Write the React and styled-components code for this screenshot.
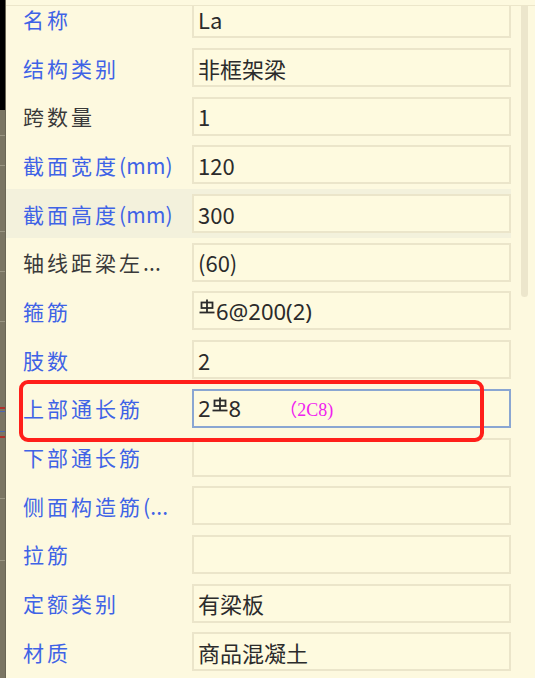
import React from 'react';
import styled, { createGlobalStyle } from 'styled-components';

const Global = createGlobalStyle`
  html, body { margin: 0; padding: 0; background: #fdf9df; }
  body { font-family: "Noto Sans CJK SC", "Noto Sans", sans-serif; }
`;

const Screen = styled.div`
  position: relative;
  width: 535px;
  height: 678px;
  display: flex;
  overflow: hidden;
  background: #fdf9df;
`;

const SideStrip = styled.div`
  width: 6px;
  flex: none;
  border-right: 1px solid #6a6655;
  box-sizing: border-box;
  background:
    linear-gradient(#000 0 110px, transparent 110px),
    linear-gradient(transparent 135px, #9a9683 135px 136px, transparent 136px 165px, #9a9683 165px 166px, transparent 166px 231px, #9a9683 231px 232px, transparent 232px 271px, #9a9683 271px 272px, transparent 272px 321px, #9a9683 321px 322px, transparent 322px 407px, #b0302a 407px 409px, transparent 409px 411px, #4a66b0 411px 412px, transparent 412px 431px, #4a66b0 431px 432px, transparent 432px 436px, #b0302a 436px 438px, transparent 438px 498px, #9a9683 498px 499px, transparent 499px 560px, #9a9683 560px 561px, transparent 561px),
    #7a7563;
`;

const Panel = styled.div`
  flex: 1;
  min-width: 0;
  display: flex;
  flex-direction: column;
`;

const TopRule = styled.div`
  flex: none;
  height: 5px;
  border-bottom: 1px solid #ece6ca;
`;

const Body = styled.div`
  flex: 1;
  min-height: 0;
  display: flex;
  overflow: hidden;
`;

const List = styled.div`
  flex: none;
  width: 505px;
  margin-top: -11.5px;
  display: flex;
  flex-direction: column;
`;

const Row = styled.div`
  flex: none;
  height: 48.7px;
  display: flex;
  align-items: center;
  background: ${p => (p.$hl ? '#f3f1dc' : 'transparent')};
`;

const Label = styled.div`
  width: 186px;
  box-sizing: border-box;
  padding-left: 17px;
  font-size: 21px;
  letter-spacing: 3px;
  white-space: nowrap;
  color: ${p => (p.$dark ? '#3a3a3a' : '#3f63e6')};
`;

const Latin = styled.span`
  letter-spacing: 0.2px;
  font-size: 21px;
`;

const ValueBox = styled.div`
  width: 319px;
  height: 39px;
  box-sizing: border-box;
  border: 2px solid ${p => (p.$active ? '#8aa6d2' : '#ebe5ca')};
  background: #fefadf;
  display: flex;
  align-items: center;
  padding-left: 4px;
  font-size: 22px;
  color: #2b2b2b;
  white-space: nowrap;
`;

const Num = styled.span`
  font-family: "Noto Sans", "Noto Sans CJK SC", sans-serif;
  font-size: 22px;
`;

const Hint = styled.span`
  margin-left: 38px;
  font-family: "Liberation Serif", "Noto Sans CJK SC", serif;
  font-size: 18px;
  color: #f020f0;
`;

const ScrollTrack = styled.div`
  flex: none;
  width: 24px;
  padding-left: 10px;
  box-sizing: border-box;
`;

const Thumb = styled.div`
  width: 7px;
  height: 291px;
  border-radius: 0 0 4px 4px;
  background: #ece6cc;
`;

const Callout = styled.div`
  position: absolute;
  left: 19px;
  top: 380px;
  width: 465px;
  height: 62px;
  box-sizing: border-box;
  border: 4px solid #ff1f1a;
  border-radius: 9px;
  pointer-events: none;
`;

const BarSymbol = styled.svg`
  width: 16px;
  height: 15px;
  margin: 0 1px;
  align-self: flex-start;
  margin-top: 6px;
  flex: none;
`;

const Rebar = () => (
  <BarSymbol viewBox="0 0 16 15" fill="none" stroke="#2b2b2b" strokeWidth="1.8">
    <line x1="8" y1="0.5" x2="8" y2="13.5" />
    <rect x="2.5" y="3.5" width="11" height="5.5" />
    <line x1="0.5" y1="13.5" x2="15.5" y2="13.5" />
  </BarSymbol>
);

const rows = [
  { label: '名称', value: 'La' },
  { label: '结构类别', value: '非框架梁' },
  { label: '跨数量', value: '1', dark: true },
  { label: '截面宽度(mm)', value: '120' },
  { label: '截面高度(mm)', value: '300', hl: true },
  { label: '轴线距梁左...', value: '(60)', dark: true },
  { label: '箍筋', value: 'stirrup' },
  { label: '肢数', value: '2' },
  { label: '上部通长筋', value: 'top', active: true },
  { label: '下部通长筋', value: '' },
  { label: '侧面构造筋(...', value: '' },
  { label: '拉筋', value: '' },
  { label: '定额类别', value: '有梁板' },
  { label: '材质', value: '商品混凝土' },
];

const splitLabel = text => {
  const m = text.match(/^([^\x00-\x7f]+)(.*)$/);
  if (!m || !m[2]) return text;
  return (
    <>
      {m[1]}
      <Latin>{m[2]}</Latin>
    </>
  );
};

const renderValue = v => {
  if (v === 'stirrup') {
    return (
      <>
        <Rebar />
        <Num>6@200(2)</Num>
      </>
    );
  }
  if (v === 'top') {
    return (
      <>
        <Num>2</Num>
        <Rebar />
        <Num>8</Num>
        <Hint>（2C8)</Hint>
      </>
    );
  }
  return v;
};

export default function App() {
  return (
    <Screen>
      <Global />
      <SideStrip />
      <Panel>
        <TopRule />
        <Body>
          <List>
            {rows.map(r => (
              <Row key={r.label} $hl={r.hl}>
                <Label $dark={r.dark}>{splitLabel(r.label)}</Label>
                <ValueBox $active={r.active}>{renderValue(r.value)}</ValueBox>
              </Row>
            ))}
          </List>
          <ScrollTrack>
            <Thumb />
          </ScrollTrack>
        </Body>
      </Panel>
      <Callout />
    </Screen>
  );
}
